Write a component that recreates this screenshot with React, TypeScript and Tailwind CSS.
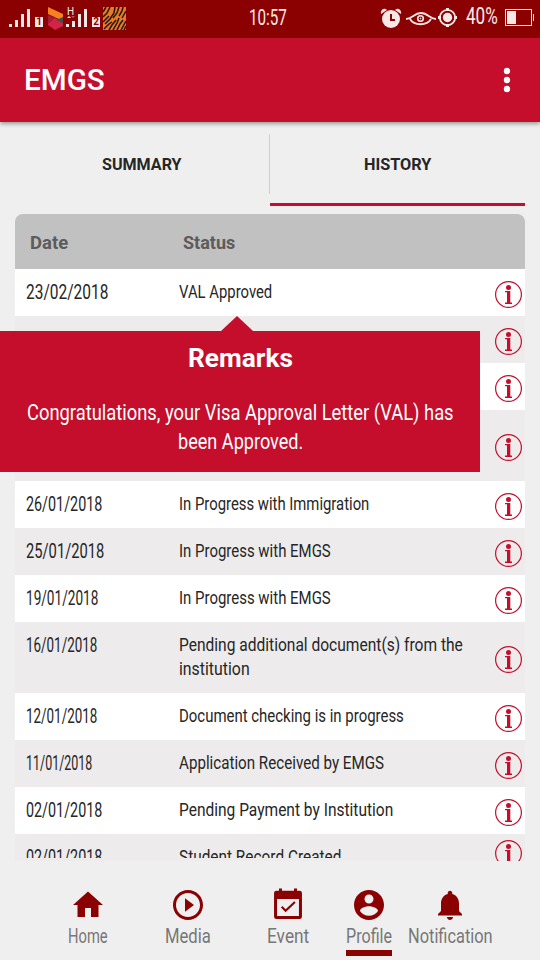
import { useLayoutEffect, useRef, useState } from "react";
import clsx from "clsx";

type Entry = {
    date?: string;
    dateWidth?: number;
    lines: { text: string; width: number }[];
    tall?: boolean;
};

const entries: Entry[] = [
    { date: "23/02/2018", dateWidth: 82, lines: [{ text: "VAL Approved", width: 93 }] },
    { lines: [] },
    { lines: [] },
    { lines: [], tall: true },
    { date: "26/01/2018", dateWidth: 76, lines: [{ text: "In Progress with Immigration", width: 190 }] },
    { date: "25/01/2018", dateWidth: 78, lines: [{ text: "In Progress with EMGS", width: 152 }] },
    { date: "19/01/2018", dateWidth: 72, lines: [{ text: "In Progress with EMGS", width: 152 }] },
    {
        date: "16/01/2018",
        dateWidth: 71,
        tall: true,
        lines: [
            { text: "Pending additional document(s) from the", width: 284 },
            { text: "institution", width: 71 },
        ],
    },
    { date: "12/01/2018", dateWidth: 71, lines: [{ text: "Document checking is in progress", width: 225 }] },
    { date: "11/01/2018", dateWidth: 66, lines: [{ text: "Application Received by EMGS", width: 205 }] },
    { date: "02/01/2018", dateWidth: 76, lines: [{ text: "Pending Payment by Institution", width: 214 }] },
    { date: "02/01/2018", dateWidth: 76, lines: [{ text: "Student Record Created", width: 162 }] },
];

// Single line of text squeezed or stretched to a given width
function Fit({ text, width, className }: { text: string; width: number; className?: string }) {
    const ref = useRef<HTMLSpanElement>(null);
    const [scale, setScale] = useState(1);

    useLayoutEffect(() => {
        if (ref.current) setScale(width / ref.current.offsetWidth);
    }, [text, width]);

    return (
        <span className={clsx("block whitespace-nowrap", className)} style={{ width }}>
            <span ref={ref} className="inline-block origin-left" style={{ transform: `scaleX(${scale})` }}>
                {text}
            </span>
        </span>
    );
}

function SignalBars() {
    return (
        <svg width="22" height="20" viewBox="0 0 22 20" fill="#f7e8e8">
            <path d="M0 16h3v3H0zM6 12h3v7H6zM12 6h3v13h-3zM18 1h3v18h-3z" />
        </svg>
    );
}

function SimNumber({ n }: { n: number }) {
    return (
        <span className="block h-[10px] w-[8px] bg-[#f7e8e8] text-center text-[10px] leading-[10px] font-bold text-[#8b0000]">
            {n}
        </span>
    );
}

function StatusBar() {
    return (
        <div className="flex h-[38px] items-start bg-[#8b0000] text-[#f9eaea]">
            <div className="ml-[9px] mt-[8px]"><SignalBars /></div>
            <div className="ml-[4px] mt-[17px]"><SimNumber n={1} /></div>
            <svg className="ml-[5px] mt-[7px]" width="16" height="24" viewBox="0 0 16 24">
                <path d="M0 0l15 7v7L0 7z" fill="#f58220" />
                <path d="M0 8l10 4-10 6z" fill="#a81c35" />
                <path d="M0 17l7-6 8 5v3l-8 4-7-5z" fill="#d32347" />
                <path d="M8 13l7-3v6z" fill="#4a4a4a" />
            </svg>
            <div className="relative ml-[2px] mt-[8px]">
                <svg width="22" height="20" viewBox="0 0 22 20" fill="#f7e8e8">
                    <path d="M0 16h3v3H0zM6 13h3v6H6zM12 6h3v13h-3zM18 1h3v18h-3zM1 10l2-2 2 2z" />
                    <path d="M5 8h4l-2 2z" fill="#b55" />
                </svg>
                <span className="absolute left-[1px] top-[-1px] text-[10px] leading-[10px]">H</span>
            </div>
            <div className="ml-[4px] mt-[17px]"><SimNumber n={2} /></div>
            <svg className="ml-[3px] mt-[7px]" width="23" height="23" viewBox="0 0 23 23">
                <path d="M0 0h23v23H0z" fill="#e67a27" />
                <g stroke="#24150f" strokeWidth="1.5" fill="none">
                    <path d="M0 5l3-5M0 10l4-4 3-6M0 15l6-6M2 17l5-5 4-6 1-6M1 22l5-5 3-2M6 23l3-5 4-5M10 11l4-5 2-6M10 23l4-7 2-5M14 23l3-6 3-4M16 9l3-5 1-4M18 23l5-9M19 11l4-7M21 23l2-4" />
                </g>
            </svg>
            <Fit text="10:57" width={38} className="ml-[123px] mt-[6px] text-[22px] leading-[24px]" />
            <svg className="ml-[93px] mt-[8px]" width="22" height="20" viewBox="0 0 22 20">
                <path d="M1 6C0 2 4-1 7 2zM21 6c1-4-3-7-6-4z" fill="#f7e8e8" />
                <circle cx="11" cy="11" r="9" fill="#f7e8e8" />
                <path d="M11 6v6h4" fill="none" stroke="#8b0000" strokeWidth="2" />
            </svg>
            <svg className="ml-[4px] mt-[11px]" width="30" height="15" viewBox="0 0 30 15" fill="none" stroke="#f7e8e8">
                <path d="M0 8C6 8 8 2 15 2s9 6 15 6M4 8c4 7 17 7 21 0" strokeWidth="1.8" />
                <circle cx="14.5" cy="7.5" r="2.8" strokeWidth="1.6" />
                <circle cx="14.5" cy="7.5" r=".5" />
            </svg>
            <svg className="ml-[2px] mt-[8px]" width="20" height="20" viewBox="0 0 20 20">
                <circle cx="9.5" cy="9.5" r="7.7" fill="none" stroke="#f7e8e8" strokeWidth="1.8" />
                <circle cx="9.5" cy="9.5" r="4.7" fill="#f7e8e8" />
                <path d="M8 0h3v3H8zM8 16h3v3H8zM0 8h3v3H0zM16 8h3v3h-3z" fill="#f7e8e8" />
            </svg>
            <Fit text="40%" width={32} className="ml-[8px] mt-[5px] text-[23px] leading-[24px]" />
            <svg className="ml-[7px] mt-[9px]" width="30" height="18" viewBox="0 0 30 18">
                <rect x=".5" y=".5" width="26" height="16" fill="none" stroke="#f7e8e8" />
                <path d="M2 2h9v13H2zM28 5h1v7h-1z" fill="#f7e8e8" />
            </svg>
        </div>
    );
}

function InfoIcon() {
    return (
        <svg className="shrink-0" width="27" height="27" viewBox="0 0 27 27" fill="#c40e2c">
            <circle cx="13.5" cy="13.5" r="12.9" fill="none" stroke="#c40e2c" strokeWidth="1.2" />
            <circle cx="13.5" cy="6.5" r="2.5" />
            <path d="M10 10h5.3v11.6H17V23h-7v-1.4h2V11.300h-2z" />
        </svg>
    );
}

function Row({ entry, index, last }: { entry: Entry; index: number; last: boolean }) {
    return (
        <div
            className={clsx(
                "flex shrink-0",
                entry.tall ? "h-[71px]" : last ? "h-[27px] overflow-hidden" : "h-[47px]",
                index % 2 ? "bg-[#edebec]" : "bg-white"
            )}
        >
            {/* the last row's text is cut a little above its icon */}
            <div className={clsx("flex flex-1", last ? "h-[24px] overflow-hidden pt-[11px]" : "pt-[11px]")}>
                <div className="w-[153px] pl-[11px]">
                    {entry.date && <Fit text={entry.date} width={entry.dateWidth!} className="text-[20px] leading-6" />}
                </div>
                <div className="pl-[11px]">
                    {entry.lines.map(line => (
                        <Fit key={line.text} text={line.text} width={line.width} className="text-[19px] leading-6" />
                    ))}
                </div>
            </div>
            <div className={clsx("pr-[3px]", entry.tall ? "pt-6" : last ? "pt-[6px]" : "pt-3")}>
                <InfoIcon />
            </div>
        </div>
    );
}

const navItems = [
    { label: "Home", width: 40, cell: "w-[100px]", icon: <path d="M10 20v-6h4v6h5v-8h3L12 3 2 12h3v8z" /> },
    {
        label: "Media",
        width: 46,
        cell: "w-[100px]",
        icon: <path d="M10 16.5l6-4.5-6-4.5v9zM12 2C6.48 2 2 6.48 2 12s4.48 10 10 10 10-4.48 10-10S17.52 2 12 2zm0 18c-4.41 0-8-3.59-8-8s3.59-8 8-8 8 3.59 8 8-3.59 8-8 8z" />,
    },
    {
        label: "Event",
        width: 42,
        cell: "w-[100px]",
        icon: (
            <>
                <path fillRule="evenodd" d="M4.3 2.5H6V1h2v1.5h8V1h2v1.5h1.700Q21.3 2.5 21.3 4v15.8Q21.3 21.3 19.7 21.3H4.3Q2.7 21.3 2.7 19.8V4Q2.7 2.5 4.3 2.5zM4.7 8v11.3h14.6V8z" />
                <path d="M7.8 13.2l2.6 2.6 6.200-5.8" fill="none" stroke="#8b0000" strokeWidth="1.4" />
            </>
        ),
    },
    {
        label: "Profile",
        width: 46,
        cell: "w-[62px]",
        active: true,
        icon: <path d="M12 2C6.48 2 2 6.48 2 12s4.48 10 10 10 10-4.48 10-10S17.52 2 12 2zm0 3c1.66 0 3 1.34 3 3s-1.34 3-3 3-3-1.34-3-3 1.34-3 3-3zm0 14.2c-2.5 0-4.71-1.28-6-3.22.03-1.99 4-3.08 6-3.08 1.99 0 5.97 1.09 6 3.08-1.29 1.94-3.5 3.22-6 3.22z" />,
    },
    {
        label: "Notification",
        width: 85,
        cell: "w-[100px]",
        icon: <path d="M12 22c1.1 0 2-.9 2-2h-4c0 1.1.89 2 2 2zm6-6v-5c0-3.07-1.64-5.64-4.5-6.32V4c0-.83-.67-1.5-1.5-1.5s-1.5.67-1.5 1.5v.68C7.63 5.36 6 7.92 6 11v5l-2 2v1h16v-1l-2-2z" />,
    },
];

export default function App() {
    return (
        <div className="flex h-[960px] w-[540px] flex-col overflow-hidden bg-[#efefef] font-['Roboto',sans-serif] text-[#262626]">
            <StatusBar />

            {/* App bar */}
            <div className="flex h-[84px] items-center justify-between bg-[#c40e2c] pl-[24px] pr-[29px] text-white shadow-[0_2px_4px_rgba(0,0,0,0.35)]">
                <Fit text="EMGS" width={81} className="text-[30px] leading-9 font-medium" />
                <svg width="8" height="26" viewBox="0 0 8 26" fill="currentColor">
                    <circle cx="4" cy="4" r="3.2" />
                    <circle cx="4" cy="13" r="3.2" />
                    <circle cx="4" cy="22" r="3.2" />
                </svg>
            </div>

            {/* Tabs */}
            <div className="mx-[15px] flex h-[84px]">
                <div className="flex flex-1 justify-center pt-[31px]">
                    <Fit text="SUMMARY" width={80} className="text-[16.5px] leading-6 font-bold" />
                </div>
                <div className="mt-3 h-[60px] w-px bg-[#cfcfcf]" />
                <div className="flex w-[255px] justify-center border-b-[3px] border-[#c40e2c] pt-[31px]">
                    <Fit text="HISTORY" width={67} className="text-[16.5px] leading-6 font-bold" />
                </div>
            </div>

            {/* History table */}
            <div className="relative mt-2 flex h-[647px] shrink-0 flex-col px-[15px]">
                <div className="flex h-[55px] shrink-0 items-center rounded-t-lg bg-[#c1c1c1] pt-[3px] text-lg font-bold text-[#5c5c5c]">
                    <div className="w-[153px] pl-[15px]"><Fit text="Date" width={38} /></div>
                    <div className="pl-[15px]"><Fit text="Status" width={52} /></div>
                </div>
                {entries.map((entry, i) => (
                    <Row key={i} entry={entry} index={i} last={i === entries.length - 1} />
                ))}

                {/* Remarks popup */}
                <div className="absolute left-0 top-[102px] w-[480px] text-white">
                    <svg className="ml-[221px] block" width="32" height="15" viewBox="0 0 32 15">
                        <path d="M0 15L16 0l16 15z" fill="#c40e2c" />
                    </svg>
                    <div className="flex h-[141px] flex-col items-center bg-[#c40e2c] pt-[11px]">
                        <Fit text="Remarks" width={105} className="text-[26px] leading-8 font-bold" />
                        <Fit
                            text="Congratulations, your Visa Approval Letter (VAL) has"
                            width={427}
                            className="mt-[24px] text-[22px] leading-[29px]"
                        />
                        <Fit text="been Approved." width={125} className="text-[22px] leading-[29px]" />
                    </div>
                </div>
            </div>

            {/* Bottom navigation */}
            <div className="flex h-[99px] pl-[38px] pt-[26px]">
                {navItems.map(item => (
                    <div key={item.label} className={clsx("flex shrink-0 flex-col items-center", item.cell)}>
                        <svg width="36" height="36" viewBox="0 0 24 24" fill="#8b0000" className="shrink-0">
                            {item.icon}
                        </svg>
                        <Fit text={item.label} width={item.width} className="text-[21px] leading-[27px] text-[#777]" />
                        {item.active && <div className="h-[6px] w-[46px] bg-[#8b0000]" />}
                    </div>
                ))}
            </div>
        </div>
    );
}
